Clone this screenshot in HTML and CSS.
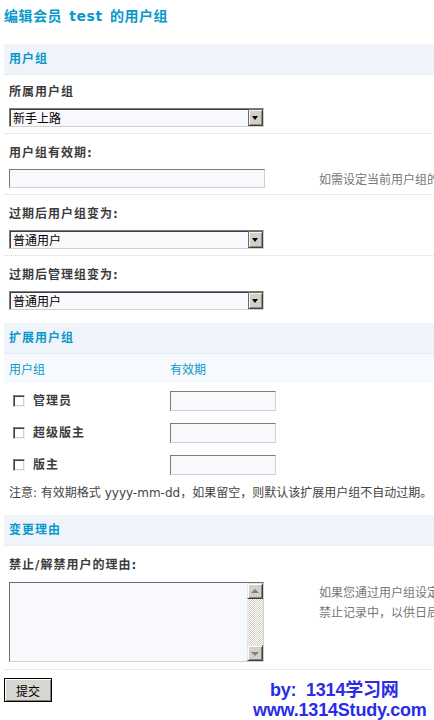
FILE: index.html
```html
<!DOCTYPE html>
<html lang="zh-CN">
<head>
<meta charset="utf-8">
<title>编辑会员 test 的用户组</title>
<link rel="stylesheet" href="styles.css">
</head>
<body>
<div class="page">
  <h1 class="title">编辑会员 test 的用户组</h1>

  <section class="sec">
    <div class="partition">用户组</div>
    <div class="label first">所属用户组</div>
    <div class="field">
      <div class="ctrl"><span class="sel"><select class="select"><option>新手上路</option></select><span class="drop"></span></span></div>
    </div>
    <div class="label">用户组有效期:</div>
    <div class="field">
      <div class="ctrl"><input class="text" type="text"></div>
      <div class="tip">如需设定当前用户组的有效期</div>
    </div>
    <div class="label">过期后用户组变为:</div>
    <div class="field">
      <div class="ctrl"><span class="sel"><select class="select"><option>普通用户</option></select><span class="drop"></span></span></div>
    </div>
    <div class="label">过期后管理组变为:</div>
    <div class="field last">
      <div class="ctrl"><span class="sel"><select class="select"><option>普通用户</option></select><span class="drop"></span></span></div>
    </div>
  </section>

  <section class="sec sec-ext">
    <div class="partition">扩展用户组</div>
    <div class="ext-head"><span class="col1">用户组</span><span>有效期</span></div>
    <div class="ext-list">
      <div class="ext-row"><label class="col1"><input class="chk" type="checkbox"><b>管理员</b></label><input class="text short" type="text"></div>
      <div class="ext-row"><label class="col1"><input class="chk" type="checkbox"><b>超级版主</b></label><input class="text short" type="text"></div>
      <div class="ext-row"><label class="col1"><input class="chk" type="checkbox"><b>版主</b></label><input class="text short" type="text"></div>
    </div>
    <div class="note">注意: 有效期格式 yyyy-mm-dd，如果留空，则默认该扩展用户组不自动过期。</div>
  </section>

  <section class="sec sec-reason">
    <div class="partition">变更理由</div>
    <div class="label">禁止/解禁用户的理由:</div>
    <div class="field top">
      <div class="ctrl">
        <div class="tbox">
          <textarea class="area"></textarea>
          <div class="sbar">
            <span class="sbtn up"></span>
            <span class="track"></span>
            <span class="sbtn down"></span>
          </div>
        </div>
      </div>
      <div class="tip tip-lines">
        <span class="line">如果您通过用户组设定禁止或解除禁止该用户</span>
        <span class="line">禁止记录中，以供日后查看</span>
      </div>
    </div>
    <div class="submit-row"><button class="submit" type="button">提交</button></div>
  </section>
</div>
<div class="watermark">
  <div class="wm1">by:&nbsp; 1314学习网</div>
  <div class="wm2">www.1314Study.com</div>
</div>
</body>
</html>
```
FILE: styles.css
```css
html, body {
  margin: 0;
  padding: 0;
  overflow: hidden;
  background: #fff;
}
body {
  position: relative;
  height: 720px;
  font: 12px/18px "DejaVu Sans", "Noto Sans CJK SC", sans-serif;
  color: #444;
}
.page {
  width: 720px;
  padding-left: 4px;
}
.title {
  margin: 0 0 18px;
  padding-top: 6px;
  font-size: 14px;
  line-height: 20px;
  font-weight: bold;
  color: #0a98ca;
  letter-spacing: 0.5px;
  word-spacing: 2px;
}
.partition {
  height: 30px;
  line-height: 30px;
  padding-left: 5px;
  background: #eff4fb;
  border-bottom: 1px dotted #dde6f1;
  color: #0a98ca;
  font-weight: bold;
  letter-spacing: 1px;
}
.label {
  padding: 10px 0 0 5px;
  line-height: 18px;
  font-weight: bold;
  color: #3c3c3c;
  letter-spacing: 1px;
}
.label.first {
  padding-top: 8px;
}
.field {
  display: flex;
  align-items: center;
  padding: 7px 0 6px 5px;
  border-bottom: 1px dotted #d9d9d9;
}
.field.last {
  border-bottom: 0;
}
.field.top {
  align-items: flex-start;
  padding-top: 8px;
  padding-bottom: 7px;
}
.ctrl {
  width: 310px;
  flex-shrink: 0;
}
.tip {
  white-space: nowrap;
  color: #777;
  font-family: "Noto Sans CJK SC", sans-serif;
}
.tip-lines {
  display: flex;
  flex-direction: column;
  line-height: 20px;
}
.sel {
  position: relative;
  display: block;
  width: 255px;
  height: 19px;
}
.select {
  appearance: none;
  -webkit-appearance: none;
  display: block;
  box-sizing: border-box;
  width: 255px;
  height: 19px;
  margin: 0;
  padding: 0 0 0 3px;
  border-style: solid;
  border-width: 1px;
  border-color: #7c7c7c #d4d0c8 #d4d0c8 #7c7c7c;
  box-shadow: inset 1px 1px #404040;
  border-radius: 0;
  background: #f8f9fc;
  font: 12px "Noto Sans CJK SC", sans-serif;
  color: #000;
  outline: none;
}
.drop {
  position: absolute;
  top: 1px;
  right: 1px;
  width: 15px;
  height: 17px;
  box-sizing: border-box;
  background: #d4d0c8;
  border: 1px solid;
  border-color: #6a6a6a #404040 #404040 #6a6a6a;
  box-shadow: inset 1px 1px #f2f2f2, inset -1px -1px #8a8a8a;
  pointer-events: none;
}
.drop::after {
  content: "";
  position: absolute;
  left: 3px;
  top: 6px;
  border-style: solid;
  border-width: 4px 3.5px 0;
  border-color: #000 transparent transparent;
}
.text {
  display: block;
  box-sizing: border-box;
  width: 256px;
  height: 19px;
  margin: 0;
  padding: 0 2px;
  border: 1px solid;
  border-color: #7a7a7a #cfcfcf #cfcfcf #7a7a7a;
  background: #f8f9fc;
  outline: none;
}
.text.short {
  width: 106px;
  height: 20px;
}
.ext-head {
  display: flex;
  height: 29px;
  line-height: 29px;
  padding-left: 5px;
  background: #f6f9fd;
  color: #0a98ca;
  font-family: "Noto Sans CJK SC", sans-serif;
}
.col1 {
  width: 161px;
  flex-shrink: 0;
  display: flex;
  align-items: center;
}
.sec-ext {
  margin-top: 7px;
}
.ext-list {
  padding-top: 2px;
}
.ext-row {
  display: flex;
  align-items: center;
  padding: 6px 0 6px 5px;
}
.ext-row b {
  letter-spacing: 1px;
  color: #3c3c3c;
}
.chk {
  appearance: none;
  -webkit-appearance: none;
  box-sizing: border-box;
  width: 12px;
  height: 12px;
  margin: 0 8px 0 4px;
  border: 1px solid;
  border-color: #808080 #f0f0f0 #f0f0f0 #808080;
  box-shadow: inset 1px 1px #404040, inset -1px -1px #d4d0c8;
  background: #fff;
}
.note {
  padding: 3px 0 0 5px;
  line-height: 18px;
  white-space: nowrap;
  color: #444;
}
.sec-reason {
  margin-top: 13px;
}
.tbox {
  display: flex;
  box-sizing: border-box;
  width: 255px;
  height: 80px;
  border: 1px solid;
  border-color: #707070 #d0d0d0 #d0d0d0 #707070;
  background: #f8f9fc;
}
.area {
  flex: 1;
  margin: 0;
  padding: 2px;
  border: 0;
  resize: none;
  background: #f8f9fc;
  outline: none;
  overflow: hidden;
}
.sbar {
  display: flex;
  flex-direction: column;
  width: 16px;
  flex-shrink: 0;
}
.sbtn {
  position: relative;
  box-sizing: border-box;
  height: 16px;
  background: #d4d0c8;
  border: 1px solid;
  border-color: #e6e6e6 #404040 #404040 #e6e6e6;
  box-shadow: inset 1px 1px #fff, inset -1px -1px #808080;
}
.sbtn::after {
  content: "";
  position: absolute;
  left: 3px;
  border-style: solid;
  border-color: transparent;
}
.sbtn.up::after {
  top: 5px;
  border-width: 0 4px 4px;
  border-bottom-color: #808080;
}
.sbtn.down::after {
  top: 6px;
  border-width: 4px 4px 0;
  border-top-color: #808080;
}
.track {
  flex: 1;
  background: repeating-conic-gradient(#d4d0c8 0 25%, #fff 0 50%) 0 0 / 2px 2px;
}
.submit-row {
  padding-top: 8px;
}
.submit {
  display: block;
  box-sizing: border-box;
  width: 48px;
  height: 24px;
  margin: 0;
  padding: 0;
  border: 1px solid #000;
  background: #d8d6d0;
  box-shadow: inset 1px 1px #fff, inset -1px -1px #808080;
  font: 12px "Noto Sans CJK SC", sans-serif;
  color: #000;
}
.watermark {
  position: absolute;
  left: 253px;
  top: 680px;
  font: bold 18px/20px "Liberation Sans", "Noto Sans CJK SC", sans-serif;
  letter-spacing: -0.2px;
  color: #2a2ce8;
  white-space: nowrap;
}
.wm1 {
  padding-left: 17px;
}
```
